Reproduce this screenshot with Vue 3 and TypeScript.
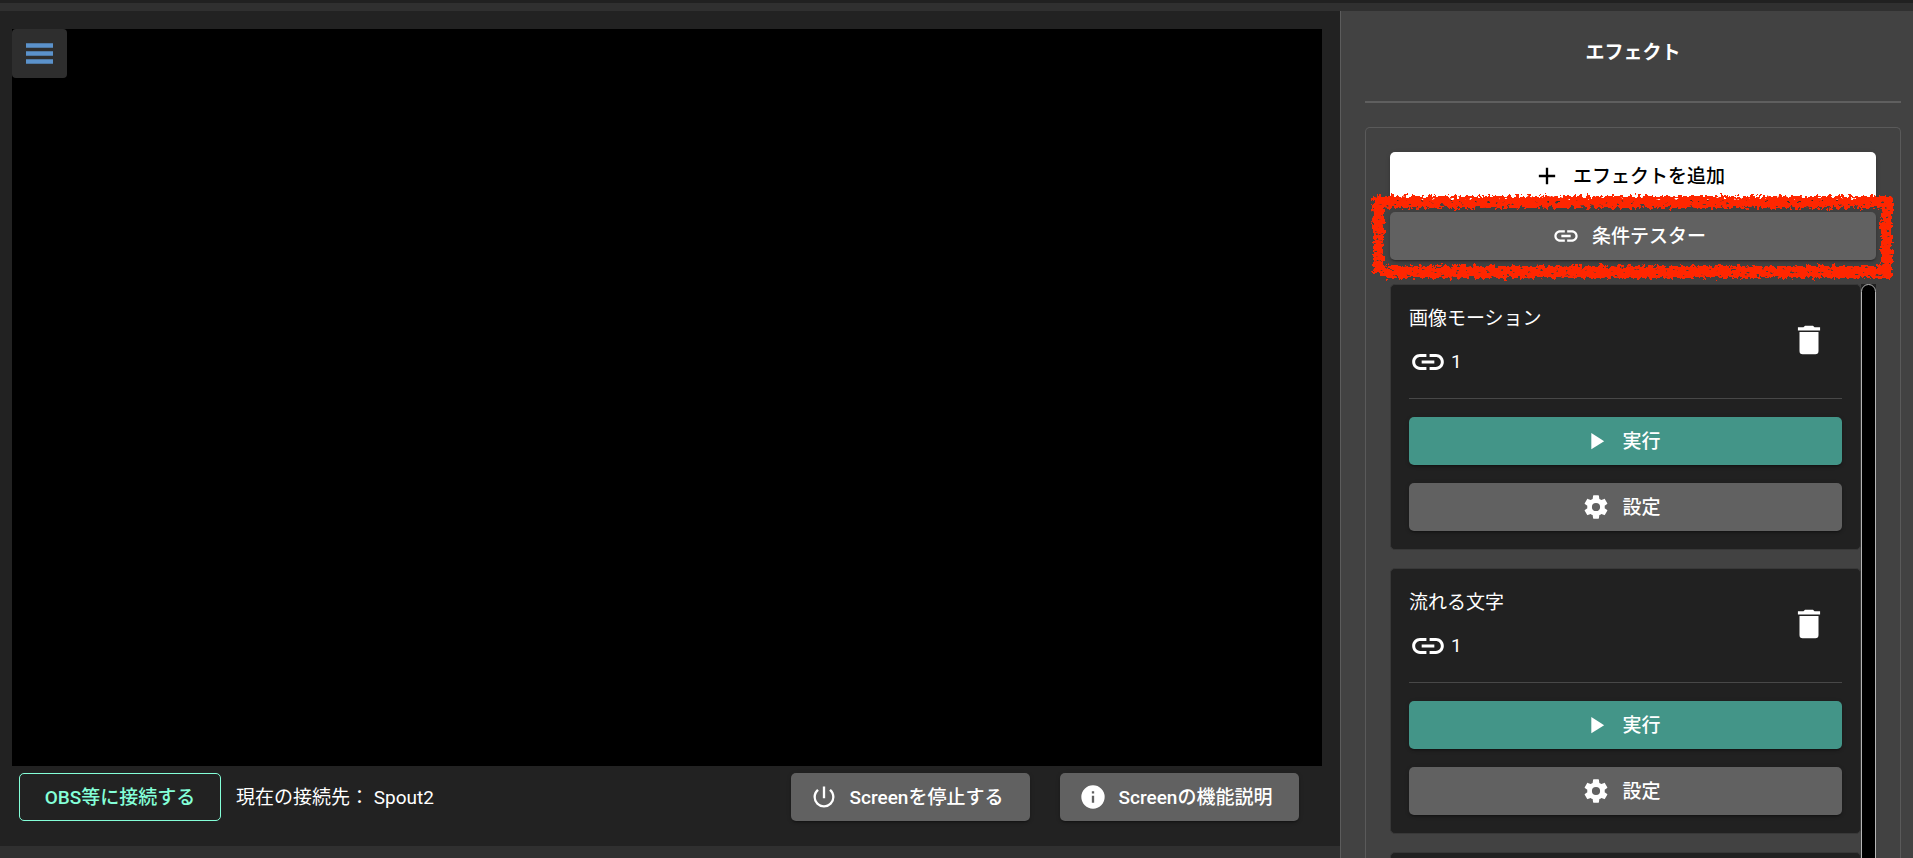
<script setup lang="ts">
interface Effect {
  id: number
  name: string
  links: number
}

const effects: Effect[] = [
  { id: 1, name: '画像モーション', links: 1 },
  { id: 2, name: '流れる文字', links: 1 },
]

const icons = {
  plus: 'M19 13h-6v6h-2v-6H5v-2h6V5h2v6h6z',
  link: 'M3.9 12c0-1.71 1.39-3.1 3.1-3.1h4V7H7c-2.76 0-5 2.24-5 5s2.24 5 5 5h4v-1.9H7c-1.71 0-3.1-1.39-3.1-3.1M8 13h8v-2H8zm9-6h-4v1.9h4c1.71 0 3.1 1.39 3.1 3.1s-1.39 3.1-3.1 3.1h-4V17h4c2.76 0 5-2.24 5-5s-2.24-5-5-5',
  trash: 'M19 4h-3.5l-1-1h-5l-1 1H5v2h14M6 19a2 2 0 0 0 2 2h8a2 2 0 0 0 2-2V7H6z',
  play: 'M8 5.14v14l11-7z',
  cog: 'M12 15.5A3.5 3.5 0 0 1 8.5 12 3.5 3.5 0 0 1 12 8.5a3.5 3.5 0 0 1 3.5 3.5 3.5 3.5 0 0 1-3.5 3.5m7.43-2.53c.04-.32.07-.64.07-.97s-.03-.66-.07-1l2.11-1.63c.19-.15.24-.42.12-.64l-2-3.46c-.12-.22-.39-.31-.61-.22l-2.49 1c-.52-.39-1.06-.73-1.69-.98l-.37-2.65A.506.506 0 0 0 14 2h-4c-.25 0-.46.18-.5.42l-.37 2.65c-.63.25-1.17.59-1.69.98l-2.49-1c-.22-.09-.49 0-.61.22l-2 3.46c-.13.22-.07.49.12.64L4.57 11c-.04.34-.07.67-.07 1s.03.65.07.97l-2.11 1.66c-.19.15-.25.42-.12.64l2 3.46c.12.22.39.3.61.22l2.49-1.01c.52.4 1.06.74 1.69.99l.37 2.65c.04.24.25.42.5.42h4c.25 0 .46-.18.5-.42l.37-2.65c.63-.26 1.17-.59 1.69-.99l2.49 1.01c.22.08.49 0 .61-.22l2-3.46c.12-.22.07-.49-.12-.64z',
  power: 'M13 3h-2v10h2zm4.83 2.17l-1.42 1.42A6.92 6.92 0 0 1 19 12c0 3.87-3.13 7-7 7s-7-3.13-7-7c0-2.2 1.02-4.16 2.58-5.42L6.17 5.17A8.93 8.93 0 0 0 3 12a9 9 0 0 0 18 0c0-2.74-1.23-5.18-3.17-6.83',
  info: 'M13 9h-2V7h2m0 10h-2v-6h2m-1-9A10 10 0 0 0 2 12a10 10 0 0 0 10 10 10 10 0 0 0 10-10A10 10 0 0 0 12 2z',
}
</script>

<template>
  <div class="page">
    <div class="topbar"></div>
    <div class="workspace">
      <main class="stage">
        <div class="screen">
          <button class="menu" type="button" aria-label="メニュー">
            <svg width="27" height="21" viewBox="0 0 27 21" aria-hidden="true">
              <path d="M0 .2h27v4.6H0zM0 8.2h27v4.6H0zM0 16.2h27v4.6H0z" fill="#5b92cb" />
            </svg>
          </button>
        </div>
        <div class="actions">
          <button class="btn outlined" type="button"><span>OBS等に接続する</span></button>
          <span class="target">現在の接続先： Spout2</span>
          <div class="screen-actions">
            <button class="btn grey" type="button">
              <svg class="icon" viewBox="0 0 24 24" aria-hidden="true"><path :d="icons.power" /></svg>
              <span>Screenを停止する</span>
            </button>
            <button class="btn grey" type="button">
              <svg class="icon" viewBox="0 0 24 24" aria-hidden="true"><path :d="icons.info" /></svg>
              <span>Screenの機能説明</span>
            </button>
          </div>
        </div>
      </main>

      <aside class="sidebar">
        <h2 class="heading">エフェクト</h2>
        <section class="panel">
          <button class="btn white" type="button">
            <svg class="icon" viewBox="0 0 24 24" aria-hidden="true"><path :d="icons.plus" /></svg>
            <span>エフェクトを追加</span>
          </button>
          <div class="marked">
            <button class="btn grey" type="button">
              <svg class="icon" viewBox="0 0 24 24" aria-hidden="true"><path :d="icons.link" /></svg>
              <span>条件テスター</span>
            </button>
            <svg class="marker" aria-hidden="true">
              <defs>
                <filter id="crayon" x="-2%" y="-10%" width="104%" height="120%" color-interpolation-filters="sRGB">
                  <feTurbulence type="fractalNoise" baseFrequency="0.24" numOctaves="3" seed="7" result="noise" />
                  <feDisplacementMap in="SourceGraphic" in2="noise" scale="9" xChannelSelector="R" yChannelSelector="G" result="rough" />
                  <feTurbulence type="fractalNoise" baseFrequency="0.2 0.34" numOctaves="2" seed="21" />
                  <feColorMatrix type="matrix" values="0 0 0 0 0  0 0 0 0 0  0 0 0 0 0  12 0 0 0 -2.9" result="grain" />
                  <feComposite in="rough" in2="grain" operator="in" />
                </filter>
              </defs>
              <g filter="url(#crayon)">
                <rect class="stroke top" />
                <rect class="stroke bottom" />
                <rect class="stroke left" />
                <rect class="stroke right" />
              </g>
            </svg>
          </div>

          <div class="scroller">
            <div class="list">
              <article v-for="effect in effects" :key="effect.id" class="card">
                <header class="card-head">
                  <div>
                    <h3 class="name">{{ effect.name }}</h3>
                    <div class="links">
                      <svg class="icon-large" viewBox="0 0 24 24" aria-hidden="true"><path :d="icons.link" /></svg>
                      <span>{{ effect.links }}</span>
                    </div>
                  </div>
                  <button class="delete" type="button" aria-label="削除">
                    <svg class="icon-large" viewBox="0 0 24 24" aria-hidden="true"><path :d="icons.trash" /></svg>
                  </button>
                </header>
                <button class="btn teal" type="button">
                  <svg class="icon" viewBox="0 0 24 24" aria-hidden="true"><path :d="icons.play" /></svg>
                  <span>実行</span>
                </button>
                <button class="btn grey" type="button">
                  <svg class="icon" viewBox="0 0 24 24" aria-hidden="true"><path :d="icons.cog" /></svg>
                  <span>設定</span>
                </button>
              </article>
              <div class="card"></div>
            </div>
            <div class="track"><div class="thumb"></div></div>
          </div>
        </section>
      </aside>
    </div>
  </div>
</template>

<style>
body {
  background: #303030;
  overflow: hidden;
}
</style>

<style scoped>
.page {
  display: flex;
  flex-direction: column;
  gap: 8px;
  height: 100vh;
  background: #303030;
  color: #fff;
  font-family: Roboto, "Noto Sans CJK JP", sans-serif;
  font-size: 19px;
  line-height: 28px;
}

.topbar {
  flex: none;
  height: 3px;
  background: #212121;
}

.workspace {
  flex: 1;
  min-height: 0;
  display: grid;
  grid-template-columns: minmax(0, 1fr) clamp(320px, 30vw, 573px);
  grid-template-rows: minmax(0, 1fr);
}

.stage {
  display: flex;
  flex-direction: column;
  margin-bottom: 12px;
  padding-top: 18px;
  background: #222;
}

.screen {
  flex: 1;
  margin: 0 18px 0 12px;
  background: #000;
}

.menu {
  display: flex;
  align-items: center;
  justify-content: center;
  width: 55px;
  height: 49px;
  padding: 0;
  border: 0;
  border-radius: 4px;
  background: #2e2e2e;
}

.actions {
  display: flex;
  align-items: center;
  padding: 7px 41px 25px 19px;
}

.target {
  margin-left: 15px;
  padding-top: 2px;
}

.screen-actions {
  display: flex;
  gap: 30px;
  margin-left: auto;
}

.btn {
  display: flex;
  align-items: center;
  justify-content: center;
  box-sizing: border-box;
  height: 48px;
  padding: 0 24px;
  border: 0;
  border-radius: 5px;
  color: #fff;
  font: inherit;
  font-weight: 500;
  white-space: nowrap;
  box-shadow: 0 3px 1px -2px rgba(0, 0, 0, 0.2), 0 2px 2px rgba(0, 0, 0, 0.14), 0 1px 5px rgba(0, 0, 0, 0.12);
}

.btn span {
  padding-top: 2px;
}

.screen-actions .btn {
  min-width: 239px;
}

.outlined {
  min-width: 202px;
  border: 1px solid #84ffd8;
  background: transparent;
  color: #84ffd8;
  box-shadow: none;
}

.grey {
  background: #616161;
}

.white {
  background: #fff;
  color: #000;
}

.teal {
  background: #439588;
}

.icon {
  flex: none;
  width: 28px;
  height: 28px;
  margin: 0 12px 0 -8px;
  fill: currentColor;
}

.icon-large {
  display: block;
  flex: none;
  width: 38px;
  height: 38px;
  fill: #fff;
}

.sidebar {
  display: flex;
  flex-direction: column;
  box-sizing: border-box;
  padding: 0 12px 0 24px;
  border-left: 1px solid #5c5c5c;
  background: #424242;
  overflow: hidden;
}

.heading {
  margin: 0;
  padding: 22px 0 28px;
  border-bottom: 2px solid #5f5f5f;
  font-size: 19px;
  font-weight: 700;
  line-height: 40px;
  text-align: center;
}

.panel {
  flex: 1;
  min-height: 0;
  display: flex;
  flex-direction: column;
  gap: 12px;
  margin-top: 24px;
  padding: 24px 24px 0;
  border: 1px solid #5a5a5a;
  border-bottom: 0;
  border-radius: 5px 5px 0 0;
}

.panel .btn {
  flex: none;
  width: 100%;
}

.marked {
  position: relative;
  z-index: 1;
}

.marker {
  position: absolute;
  top: -20px;
  left: -20px;
  width: calc(100% + 40px);
  height: calc(100% + 40px);
  overflow: visible;
  pointer-events: none;
}

.stroke {
  fill: #ff2600;
}

.top {
  x: 3px;
  y: 4px;
  width: calc(100% - 7px);
  height: 12px;
}

.bottom {
  x: 11px;
  y: calc(100% - 14px);
  width: calc(100% - 15px);
  height: 12px;
}

.left {
  x: 3px;
  y: 4px;
  width: 11px;
  height: calc(100% - 12px);
}

.right {
  x: calc(100% - 15px);
  y: 4px;
  width: 11px;
  height: calc(100% - 7px);
}

.scroller {
  flex: 1;
  min-height: 0;
  display: flex;
  margin-top: 12px;
}

.list {
  flex: 1;
  display: flex;
  flex-direction: column;
  gap: 18px;
  overflow: hidden;
}

.card {
  flex: none;
  display: flex;
  flex-direction: column;
  gap: 18px;
  padding: 18px;
  border: 1px solid #383838;
  border-radius: 5px;
  background: #212121;
}

.card-head {
  display: flex;
  align-items: flex-start;
  justify-content: space-between;
  padding-bottom: 17px;
  border-bottom: 1px solid #484848;
}

.name {
  margin: 0 0 8px;
  font-size: 19px;
  font-weight: 400;
  line-height: 32px;
}

.links {
  display: flex;
  align-items: center;
  gap: 4px;
}

.delete {
  margin: 18px 14px 0 0;
  padding: 0;
  border: 0;
  background: transparent;
}

.track {
  flex: none;
  width: 15px;
  background: #212121;
  overflow: hidden;
}

.thumb {
  box-sizing: border-box;
  height: 120%;
  border: 1px solid #b5b5b5;
  border-radius: 8px;
  background: #000;
}
</style>
